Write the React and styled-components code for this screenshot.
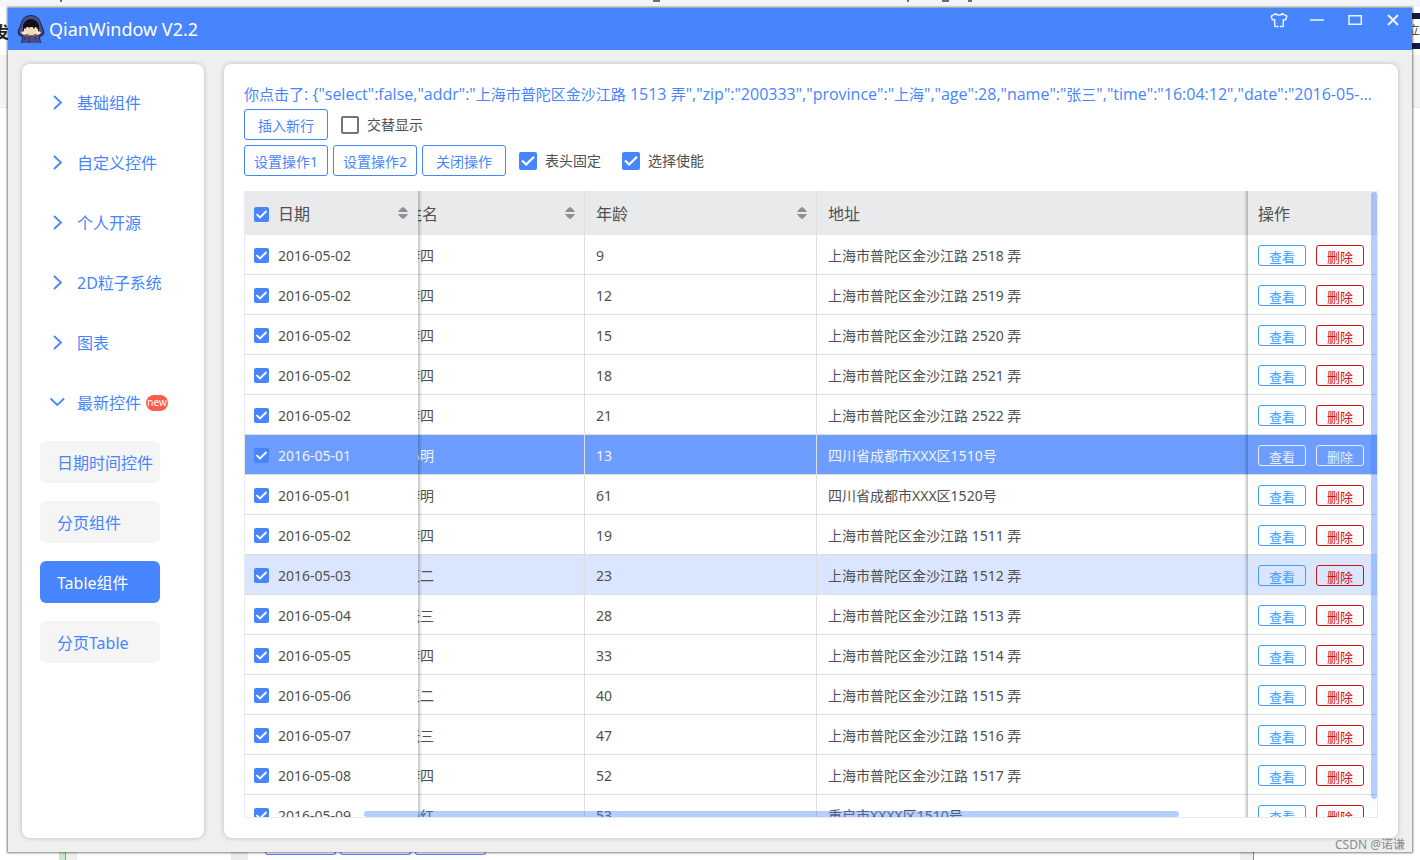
import React, { useLayoutEffect, useRef, useState } from 'react';
import styled, { createGlobalStyle, css } from 'styled-components';

const font = '"Noto Sans", "Noto Sans CJK SC", sans-serif';
const blue = '#4785ff';

const GlobalStyle = createGlobalStyle`
  *, *::before, *::after { box-sizing: border-box; }
  body { margin: 0; background: #fff; font-family: ${font}; color: #505050; }
  button, input { font-family: inherit; margin: 0; }
`;

const Desktop = styled.div`
  position: relative;
  height: 100vh;
  min-height: 480px;
  padding: 8px;
  overflow: hidden;
  background: linear-gradient(#f4f5f8 7px, #fff 7px, #fff 55px, #f4f4f4 55px, #f4f4f4 107px, #e8e8e8 107px, #e8e8e8 108px, #fff 108px);
`;

const Behind = styled.div`
  position: absolute;
  overflow: hidden;
  white-space: nowrap;
`;
const BehindLeft = styled(Behind)`
  left: -7px;
  top: 20px;
  font-size: 16px;
  line-height: 24px;
  font-weight: 700;
  color: #222;
`;
const BehindRight = styled(Behind)`
  right: 0;
  top: 13px;
  width: 12px;
  height: 36px;
  border: solid #14194a;
  border-width: 6px 0;
  font-size: 12px;
  line-height: 24px;
`;
const BehindTop = styled(Behind)`
  top: 0;
  left: ${(p) => p.$x}px;
  width: ${(p) => p.$w}px;
  height: 2px;
  background: #5b6f95;
`;
const BehindBottom = styled(Behind)`
  left: 0;
  right: 0;
  bottom: 0;
  height: 8px;
  display: flex;
  padding-left: 59px;
`;
const Sliver = styled.div`
  width: ${(p) => p.$w}px;
  flex: ${(p) => (p.$grow ? '1' : 'none')};
  background: ${(p) => p.$c};
  border-left: 1px solid ${(p) => p.$edge || p.$c};
  display: flex;
  align-items: flex-start;
  gap: 4px;
  padding-left: ${(p) => p.$pad || 0}px;
`;
const SliverButton = styled.div`
  width: 71px;
  height: 3px;
  border: 1px solid ${blue};
  border-top: 0;
  border-radius: 0 0 3px 3px;
`;

const Window = styled.div`
  position: relative;
  height: 100%;
  display: flex;
  flex-direction: column;
  background: #efefef;
  box-shadow: 0 0 2px 1px rgba(0, 0, 0, 0.5);
`;

const TitleBar = styled.header`
  height: 42px;
  flex: none;
  display: flex;
  align-items: center;
  padding: 0 10px 0 9px;
  background: ${blue};
  color: #fff;
`;
const Title = styled.h1`
  margin: 0 auto 0 4px;
  font-size: 18px;
  font-weight: 400;
  line-height: 24px;
`;
const Controls = styled.div`
  display: flex;
  align-self: flex-start;
  gap: 20px;
  padding-top: 3px;
`;
const ControlButton = styled.button`
  display: block;
  width: 18px;
  height: 18px;
  padding: 0;
  border: 0;
  background: none;
  color: #eef4ff;
  svg { display: block; }
`;

const Body = styled.div`
  flex: 1;
  min-height: 0;
  display: flex;
  gap: 20px;
  padding: 14px;
`;
const card = css`
  background: #fff;
  border-radius: 8px;
  box-shadow: 0 0 5px rgba(0, 0, 0, 0.22);
`;
const Sidebar = styled.nav`
  ${card}
  width: 182px;
  flex: none;
  display: flex;
  flex-direction: column;
  gap: 18px;
  padding: 17px 18px;
  overflow: hidden;
`;
const MenuItem = styled.button`
  display: flex;
  align-items: center;
  height: 42px;
  flex: none;
  padding: 2px 0 0 9px;
  border: 0;
  background: none;
  color: ${blue};
  font-size: 16px;
  line-height: 24px;
  white-space: nowrap;
  svg { flex: none; margin-right: 11px; }
`;
const Badge = styled.span`
  width: 22px;
  height: 16px;
  margin-left: 5px;
  border-radius: 8px;
  background: #ff5b50;
  color: #fff;
  font-size: 10px;
  line-height: 15px;
  text-align: center;
`;
const SubItem = styled.button`
  width: 120px;
  height: 42px;
  flex: none;
  padding: 0 0 0 17px;
  border: 0;
  border-radius: 6px;
  text-align: left;
  white-space: nowrap;
  font-size: 16px;
  background: ${(p) => (p.$active ? blue : '#f5f5f5')};
  color: ${(p) => (p.$active ? '#fff' : blue)};
`;

const Main = styled.main`
  ${card}
  flex: 1;
  min-width: 0;
  display: flex;
  flex-direction: column;
  padding: 20px;
`;
const Message = styled.p`
  margin: 0 0 4px;
  color: ${blue};
  font-family: "Open Sans", "Noto Sans CJK SC", sans-serif;
  font-size: 16px;
  line-height: 21px;
  white-space: nowrap;
  overflow: hidden;
  text-overflow: ellipsis;
`;
const Hanzi = styled.span`
  font-size: 15px;
`;
const Toolbar = styled.div`
  display: flex;
  flex: none;
  gap: 5px;
  margin-bottom: ${(p) => (p.$last ? 15 : 5)}px;
`;
const ToolButton = styled.button`
  width: 84px;
  height: 31px;
  padding: 2px 0 0;
  border: 1px solid ${blue};
  border-radius: 3px;
  background: #fff;
  color: ${blue};
  font-size: 14px;
  line-height: 20px;
`;
const CheckLabel = styled.label`
  display: flex;
  align-items: center;
  gap: 8px;
  margin: 0 8px;
  font-size: 14px;
  line-height: 20px;
`;
const Tick = styled.input.attrs({ type: 'checkbox' })`
  appearance: none;
  flex: none;
  width: ${(p) => p.$size}px;
  height: ${(p) => p.$size}px;
  border: 2px solid #757575;
  border-radius: 2px;
  background: #fff;
  &:checked {
    border: 0;
    background: ${blue} url("data:image/svg+xml,%3Csvg xmlns='http://www.w3.org/2000/svg' viewBox='0 0 18 18'%3E%3Cpath d='M3 8.5l4.2 4L15 4.8' fill='none' stroke='%23fff' stroke-width='2.3'/%3E%3C/svg%3E") center / 100% no-repeat;
  }
`;

const TableFrame = styled.div`
  position: relative;
  flex: 1;
  min-height: 0;
  border: 1px solid #e8eaec;
  border-top: 0;
`;
const Scroller = styled.div`
  height: 100%;
  overflow: auto;
  scrollbar-width: none;
`;
const Table = styled.table`
  width: calc(100% + 23px);
  table-layout: fixed;
  border-collapse: separate;
  border-spacing: 0;
`;
const Col = styled.col`
  width: ${(p) => (p.$w ? `${p.$w}px` : 'auto')};
`;
const pinned = {
  left: css`
    left: 0;
    z-index: 1;
    padding-left: 9px;
    padding-right: 1px;
    border-right: 0;
    &::after {
      content: '';
      position: absolute;
      left: 100%;
      top: 0;
      width: 4px;
      background: linear-gradient(90deg, rgba(0, 0, 0, 0.24), transparent);
    }
  `,
  right: css`
    right: 0;
    z-index: 1;
    padding-left: 10px;
    border-right: 0;
    &::before {
      content: '';
      position: absolute;
      right: 100%;
      top: 0;
      width: 4px;
      background: linear-gradient(270deg, rgba(0, 0, 0, 0.24), transparent);
    }
  `,
};
const cell = css`
  position: sticky;
  padding: 2px 0 0 11px;
  text-align: left;
  font-weight: 400;
  white-space: nowrap;
  background: inherit;
  border-right: ${(p) => (p.$line ? '1px solid #dedede' : '0')};
  ${(p) => p.$pin && pinned[p.$pin]}
`;
const Head = styled.tr`
  background: #e8eaec;
`;
const Th = styled.th`
  ${cell}
  top: 0;
  z-index: ${(p) => (p.$pin ? 3 : 2)};
  height: 44px;
  font-size: 16px;
  line-height: 24px;
  &::before, &::after { bottom: 0; }
`;
const Row = styled.tr`
  background: ${(p) => ({ selected: '#6d9dff', hover: '#dae6ff' })[p.$state] || '#fff'};
  color: ${(p) => (p.$state === 'selected' ? '#f2f2f2' : 'inherit')};
`;
const Td = styled.td`
  ${cell}
  height: 40px;
  border-bottom: 1px solid #dedede;
  font-size: 14px;
  line-height: 20px;
  &::before, &::after { bottom: -1px; }
`;
const CellLine = styled.div`
  display: flex;
  align-items: center;
  gap: 9px;
`;
const Actions = styled(CellLine)`
  gap: 10px;
`;
const SortButton = styled.button`
  display: block;
  width: 12px;
  height: 16px;
  margin: 0 8px 0 auto;
  padding: 0;
  border: 0;
  background: none;
  svg { display: block; }
`;
const RowButton = styled.button`
  width: 48px;
  height: 21px;
  padding: 3px 0 0;
  border: 1px solid;
  border-radius: 3px;
  background: transparent;
  color: ${(p) => (p.$light ? '#e6eeff' : p.$danger ? '#d01414' : '#409eff')};
  font-size: 13px;
  line-height: 17px;
`;
const Thumb = styled.div`
  position: absolute;
  z-index: 4;
  border-radius: 3px;
  background: rgba(71, 133, 255, 0.4);
  ${(p) => (p.$vertical
    ? 'right: 0; top: 1px; width: 6px; height: 97%;'
    : 'left: 10.5%; bottom: 0; height: 6px; width: 72%;')}
`;
const Watermark = styled.div`
  position: absolute;
  right: 7px;
  bottom: -1px;
  font-size: 12px;
  line-height: 16px;
  color: #8c8c8c;
`;

function Avatar() {
  return (
    <svg width="28" height="28" viewBox="0 0 28 28" aria-hidden="true">
      <path d="M14 0C9 0 5 3 4 8L1 15c-1 3 0 5 2 6l2 1-1 6h20l-1-6 2-1c2-1 3-3 2-6l-3-7C23 3 19 0 14 0z" fill="#252a4e" />
      <path d="M14 1C9 1 6 4 5 8l-3 8c0 3 2 4 4 4v2l-1 6h18l-1-6v-2c2 0 4-1 4-4l-3-8c-1-4-4-7-9-7z" fill="#474f88" />
      <path d="M14 4c-5 0-8 4-8 9 0 4 2 6 4 7h8c2-1 4-3 4-7 0-5-3-9-8-9z" fill="#14141e" />
      <path d="M7 12h14v4c-1 3-3 4-7 4s-6-1-7-4z" fill="#f4d9bd" />
      <path d="M6 13c0-5 3-8 8-8s8 3 8 8l-2 1-1-3-2 3-2-3-3 2-1-2-3 3-1-1z" fill="#101018" />
      <path d="M4 17l4-1 2 2-2 2-3-1zM24 17l-4-1-2 2 2 2 3-1z" fill="#f8e6d2" />
      <path d="M9 20.500h10" stroke="#a85f45" />
      <path d="M12 22v6M18 22v3M8 22v3" stroke="#2b315c" />
    </svg>
  );
}

function Arrow({ open }) {
  return (
    <svg width="17" height="16" viewBox="0 0 17 16" fill="none" stroke={blue} strokeWidth="1.8" aria-hidden="true">
      <path d={open ? 'M1.5 3.5l6.8 6.5 6.8-6.5' : 'M5 1l7 6.5-7 6.5'} />
    </svg>
  );
}

function Sort() {
  return (
    <SortButton aria-label="排序">
      <svg width="12" height="16" viewBox="0 0 12 16" fill="#8f8f8f">
        <path d="M1 6c0-.5 4-5 5-5s5 4.500 5 5z" />
        <path d="M1 8c0 .5 4 5 5 5s5-4.500 5-5z" />
      </svg>
    </SortButton>
  );
}

const menu = ['基础组件', '自定义控件', '个人开源', '2D粒子系统', '图表'];
const subMenu = ['日期时间控件', '分页组件', 'Table组件', '分页Table'];
const sh = (n) => `上海市普陀区金沙江路 ${n} 弄`;
const rows = [
  ['2016-05-02', '李四', 9, sh(2518)],
  ['2016-05-02', '李四', 12, sh(2519)],
  ['2016-05-02', '李四', 15, sh(2520)],
  ['2016-05-02', '李四', 18, sh(2521)],
  ['2016-05-02', '李四', 21, sh(2522)],
  ['2016-05-01', '小明', 13, '四川省成都市XXX区1510号', 'selected'],
  ['2016-05-01', '李明', 61, '四川省成都市XXX区1520号'],
  ['2016-05-02', '李四', 19, sh(1511)],
  ['2016-05-03', '王二', 23, sh(1512), 'hover'],
  ['2016-05-04', '张三', 28, sh(1513)],
  ['2016-05-05', '李四', 33, sh(1514)],
  ['2016-05-06', '王二', 40, sh(1515)],
  ['2016-05-07', '张三', 47, sh(1516)],
  ['2016-05-08', '李四', 52, sh(1517)],
  ['2016-05-09', '小红', 53, '重启市XXXX区1510号'],
];
const message = '你点击了: {"select":false,"addr":"上海市普陀区金沙江路 1513 弄","zip":"200333","province":"上海","age":28,"name":"张三","time":"16:04:12","date":"2016-05-04"}';

function MixedText({ text }) {
  return text
    .split(/([\u4e00-\u9fff]+)/)
    .map((run, i) => (i % 2 ? <Hanzi key={i}>{run}</Hanzi> : run));
}

function DataTable() {
  const ref = useRef(null);
  useLayoutEffect(() => {
    ref.current.scrollLeft = 23;
  }, []);
  return (
    <TableFrame>
      <Scroller ref={ref}>
        <Table>
          <colgroup>
            <Col $w={173} />
            <Col $w={190} />
            <Col $w={232} />
            <Col />
            <Col $w={129} />
          </colgroup>
          <thead>
            <Head>
              <Th $pin="left">
                <CellLine>
                  <Tick $size={15} defaultChecked aria-label="全选" />
                  日期
                  <Sort />
                </CellLine>
              </Th>
              <Th $line><CellLine>姓名<Sort /></CellLine></Th>
              <Th $line><CellLine>年龄<Sort /></CellLine></Th>
              <Th>地址</Th>
              <Th $pin="right">操作</Th>
            </Head>
          </thead>
          <tbody>
            {rows.map(([date, name, age, addr, state], i) => (
              <Row key={i} $state={state}>
                <Td $pin="left">
                  <CellLine>
                    <Tick $size={15} defaultChecked aria-label={`选择 ${date}`} />
                    {date}
                  </CellLine>
                </Td>
                <Td $line>{name}</Td>
                <Td $line>{age}</Td>
                <Td>{addr}</Td>
                <Td $pin="right">
                  <Actions>
                    <RowButton $light={state === 'selected'}>查看</RowButton>
                    <RowButton $danger $light={state === 'selected'}>删除</RowButton>
                  </Actions>
                </Td>
              </Row>
            ))}
          </tbody>
        </Table>
      </Scroller>
      <Thumb $vertical />
      <Thumb />
    </TableFrame>
  );
}

export default function App() {
  const [active, setActive] = useState(2);
  return (
    <Desktop>
      <GlobalStyle />
      <BehindTop $x={60} $w={2} />
      <BehindTop $x={653} $w={7} />
      <BehindTop $x={907} $w={2} />
      <BehindTop $x={942} $w={7} />
      <BehindTop $x={968} $w={4} />
      <BehindLeft>发</BehindLeft>
      <BehindRight>立即</BehindRight>
      <BehindBottom>
        <Sliver $w={6} $c="#cbe8cd" />
        <Sliver $w={12} $c="#efefef" $edge="#999" />
        <Sliver $w={154} $c="#fff" />
        <Sliver $w={17} $c="#ebebeb" />
        <Sliver $grow $c="#fff" $pad={16}>
          <SliverButton />
          <SliverButton />
          <SliverButton />
        </Sliver>
        <Sliver $w={13} $c="#efefef" />
        <Sliver $w={167} $c="#fff" $edge="#888" />
      </BehindBottom>
      <Window>
        <TitleBar>
          <Avatar />
          <Title>QianWindow V2.2</Title>
          <Controls>
            <ControlButton aria-label="皮肤">
              <svg width="18" height="18" viewBox="0 0 18 18" fill="none" stroke="currentColor" strokeWidth="1.4" strokeLinejoin="round" strokeLinecap="round">
                <path d="M8 15.500H5.500q-.8 0-.8-.8V8.600L2.300 8.800 1.200 5.200 5.800 2.600c1 2 5.400 2 6.400 0l4.600 2.600-1.100 3.600-2.400-.2v6.100q0 .8-.8.8H10.500" />
              </svg>
            </ControlButton>
            <ControlButton aria-label="最小化">
              <svg width="18" height="18" stroke="currentColor" strokeWidth="2"><path d="M2 9h14" opacity=".8" /></svg>
            </ControlButton>
            <ControlButton aria-label="最大化">
              <svg width="18" height="18" fill="none" stroke="currentColor" strokeWidth="1.500"><path d="M3 4.800h12.300v8.500H3z" /></svg>
            </ControlButton>
            <ControlButton aria-label="关闭">
              <svg width="18" height="18" stroke="currentColor" strokeWidth="2"><path d="M4 4l10 10M14 4L4 14" /></svg>
            </ControlButton>
          </Controls>
        </TitleBar>
        <Body>
          <Sidebar>
            {menu.map((m) => (
              <MenuItem key={m}><Arrow />{m}</MenuItem>
            ))}
            <MenuItem><Arrow open />最新控件<Badge>new</Badge></MenuItem>
            {subMenu.map((m, i) => (
              <SubItem key={m} $active={i === active} onClick={() => setActive(i)}>{m}</SubItem>
            ))}
          </Sidebar>
          <Main>
            <Message><MixedText text={message} /></Message>
            <Toolbar>
              <ToolButton>插入新行</ToolButton>
              <CheckLabel><Tick $size={18} />交替显示</CheckLabel>
            </Toolbar>
            <Toolbar $last>
              <ToolButton>设置操作1</ToolButton>
              <ToolButton>设置操作2</ToolButton>
              <ToolButton>关闭操作</ToolButton>
              <CheckLabel><Tick $size={18} defaultChecked />表头固定</CheckLabel>
              <CheckLabel><Tick $size={18} defaultChecked />选择使能</CheckLabel>
            </Toolbar>
            <DataTable />
          </Main>
        </Body>
        <Watermark>CSDN @诺谦</Watermark>
      </Window>
    </Desktop>
  );
}
